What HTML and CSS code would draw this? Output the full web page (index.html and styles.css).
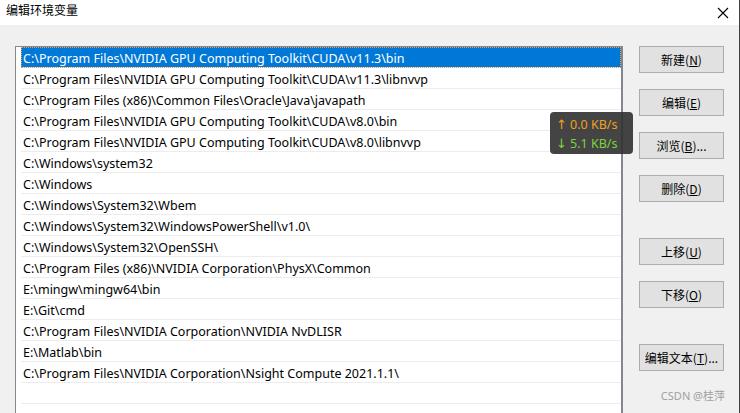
FILE: index.html
```html
<!DOCTYPE html>
<html lang="zh-CN">
<head>
<meta charset="utf-8">
<title>编辑环境变量</title>
<link rel="stylesheet" href="styles.css">
</head>
<body>
<div class="window">
  <div class="titlebar">
    <span class="title">编辑环境变量</span>
    <svg class="close" width="12" height="12" viewBox="0 0 12 12"><path d="M1 1L11 11M11 1L1 11" stroke="#000" stroke-width="1.1" fill="none"/></svg>
  </div>
  <div class="content">
    <div class="list">
      <div class="row selected">C:\Program Files\NVIDIA GPU Computing Toolkit\CUDA\v11.3\bin</div>
      <div class="row">C:\Program Files\NVIDIA GPU Computing Toolkit\CUDA\v11.3\libnvvp</div>
      <div class="row">C:\Program Files (x86)\Common Files\Oracle\Java\javapath</div>
      <div class="row">C:\Program Files\NVIDIA GPU Computing Toolkit\CUDA\v8.0\bin</div>
      <div class="row">C:\Program Files\NVIDIA GPU Computing Toolkit\CUDA\v8.0\libnvvp</div>
      <div class="row">C:\Windows\system32</div>
      <div class="row">C:\Windows</div>
      <div class="row">C:\Windows\System32\Wbem</div>
      <div class="row">C:\Windows\System32\WindowsPowerShell\v1.0\</div>
      <div class="row">C:\Windows\System32\OpenSSH\</div>
      <div class="row">C:\Program Files (x86)\NVIDIA Corporation\PhysX\Common</div>
      <div class="row">E:\mingw\mingw64\bin</div>
      <div class="row">E:\Git\cmd</div>
      <div class="row">C:\Program Files\NVIDIA Corporation\NVIDIA NvDLISR</div>
      <div class="row">E:\Matlab\bin</div>
      <div class="row">C:\Program Files\NVIDIA Corporation\Nsight Compute 2021.1.1\</div>
      <div class="row"></div>
      <div class="row"></div>
    </div>
    <div class="buttons">
      <button class="btn">新建(<u>N</u>)</button>
      <button class="btn">编辑(<u>E</u>)</button>
      <button class="btn">浏览(<u>B</u>)...</button>
      <button class="btn">删除(<u>D</u>)</button>
      <button class="btn group">上移(<u>U</u>)</button>
      <button class="btn">下移(<u>O</u>)</button>
      <button class="btn group">编辑文本(<u>T</u>)...</button>
    </div>
  </div>
  <div class="netspeed">
    <div class="up"><span class="arrow">↑</span>0.0 KB/s</div>
    <div class="down"><span class="arrow">↓</span>5.1 KB/s</div>
  </div>
  <div class="watermark">CSDN @桂萍</div>
</div>
</body>
</html>
```

FILE: styles.css
```css
* { box-sizing: border-box; }
html, body {
  margin: 0;
  padding: 0;
  width: 740px;
  height: 413px;
  overflow: hidden;
}
body {
  font-family: "Noto Sans", "Noto Sans CJK SC", sans-serif;
  font-size: 12px;
  color: #000;
}
.window {
  position: relative;
  width: 740px;
  height: 413px;
  background: #f0f0f0;
  border-right: 1px solid #404040;
}
.titlebar {
  height: 25px;
  background: #fff;
  display: flex;
  align-items: center;
  justify-content: space-between;
  padding: 0 10px 6px 6px;
}
.title {
  font-family: "Noto Sans CJK SC", sans-serif;
  font-size: 12px;
  line-height: 16px;
}
.close { display: block; margin-top: 6px; }
.content {
  display: flex;
  align-items: flex-start;
  padding: 21px 0 0 15px;
}
.list {
  width: 608px;
  height: 380px;
  background: #fff;
  border: 1px solid #828790;
  border-right-width: 2px;
  padding: 0 0 0 5px;
  overflow: hidden;
}
.row {
  height: 21px;
  line-height: 20px;
  padding: 2px 0 0 2px;
  border-bottom: 1px solid #ececec;
  white-space: nowrap;
  font-size: 12.5px;
  color: #000;
}
.row.selected {
  background: #0078d7;
  color: #fff;
  outline: 1px dotted #ff9a3c;
  outline-offset: -1px;
}
.buttons {
  display: flex;
  flex-direction: column;
  gap: 16px;
  margin-left: 16px;
  margin-top: 0;
}
.btn {
  width: 85px;
  height: 27px;
  background: #e1e1e1;
  border: 1px solid #adadad;
  font-family: "Noto Sans CJK SC", sans-serif;
  font-size: 12px;
  color: #000;
  padding: 0;
  margin: 0;
  text-align: center;
}
.btn.group { margin-top: 20px; }
.netspeed {
  position: absolute;
  left: 550px;
  top: 112px;
  width: 83px;
  height: 42px;
  background: rgba(48, 48, 48, 0.9);
  border-radius: 4px;
  padding: 3px 0 0 6px;
  font-family: "Noto Sans", sans-serif;
  font-size: 12.5px;
  line-height: 19px;
}
.arrow {
  display: inline-block;
  width: 14px;
  font-family: "DejaVu Sans", sans-serif;
  font-size: 13px;
}
.up { color: #f0a020; }
.down { color: #7ad43a; }
.watermark {
  position: absolute;
  right: 14px;
  bottom: 10px;
  color: #a0a0a0;
  font-family: "Noto Sans", "Noto Sans CJK SC", sans-serif;
  font-size: 11px;
}
```
